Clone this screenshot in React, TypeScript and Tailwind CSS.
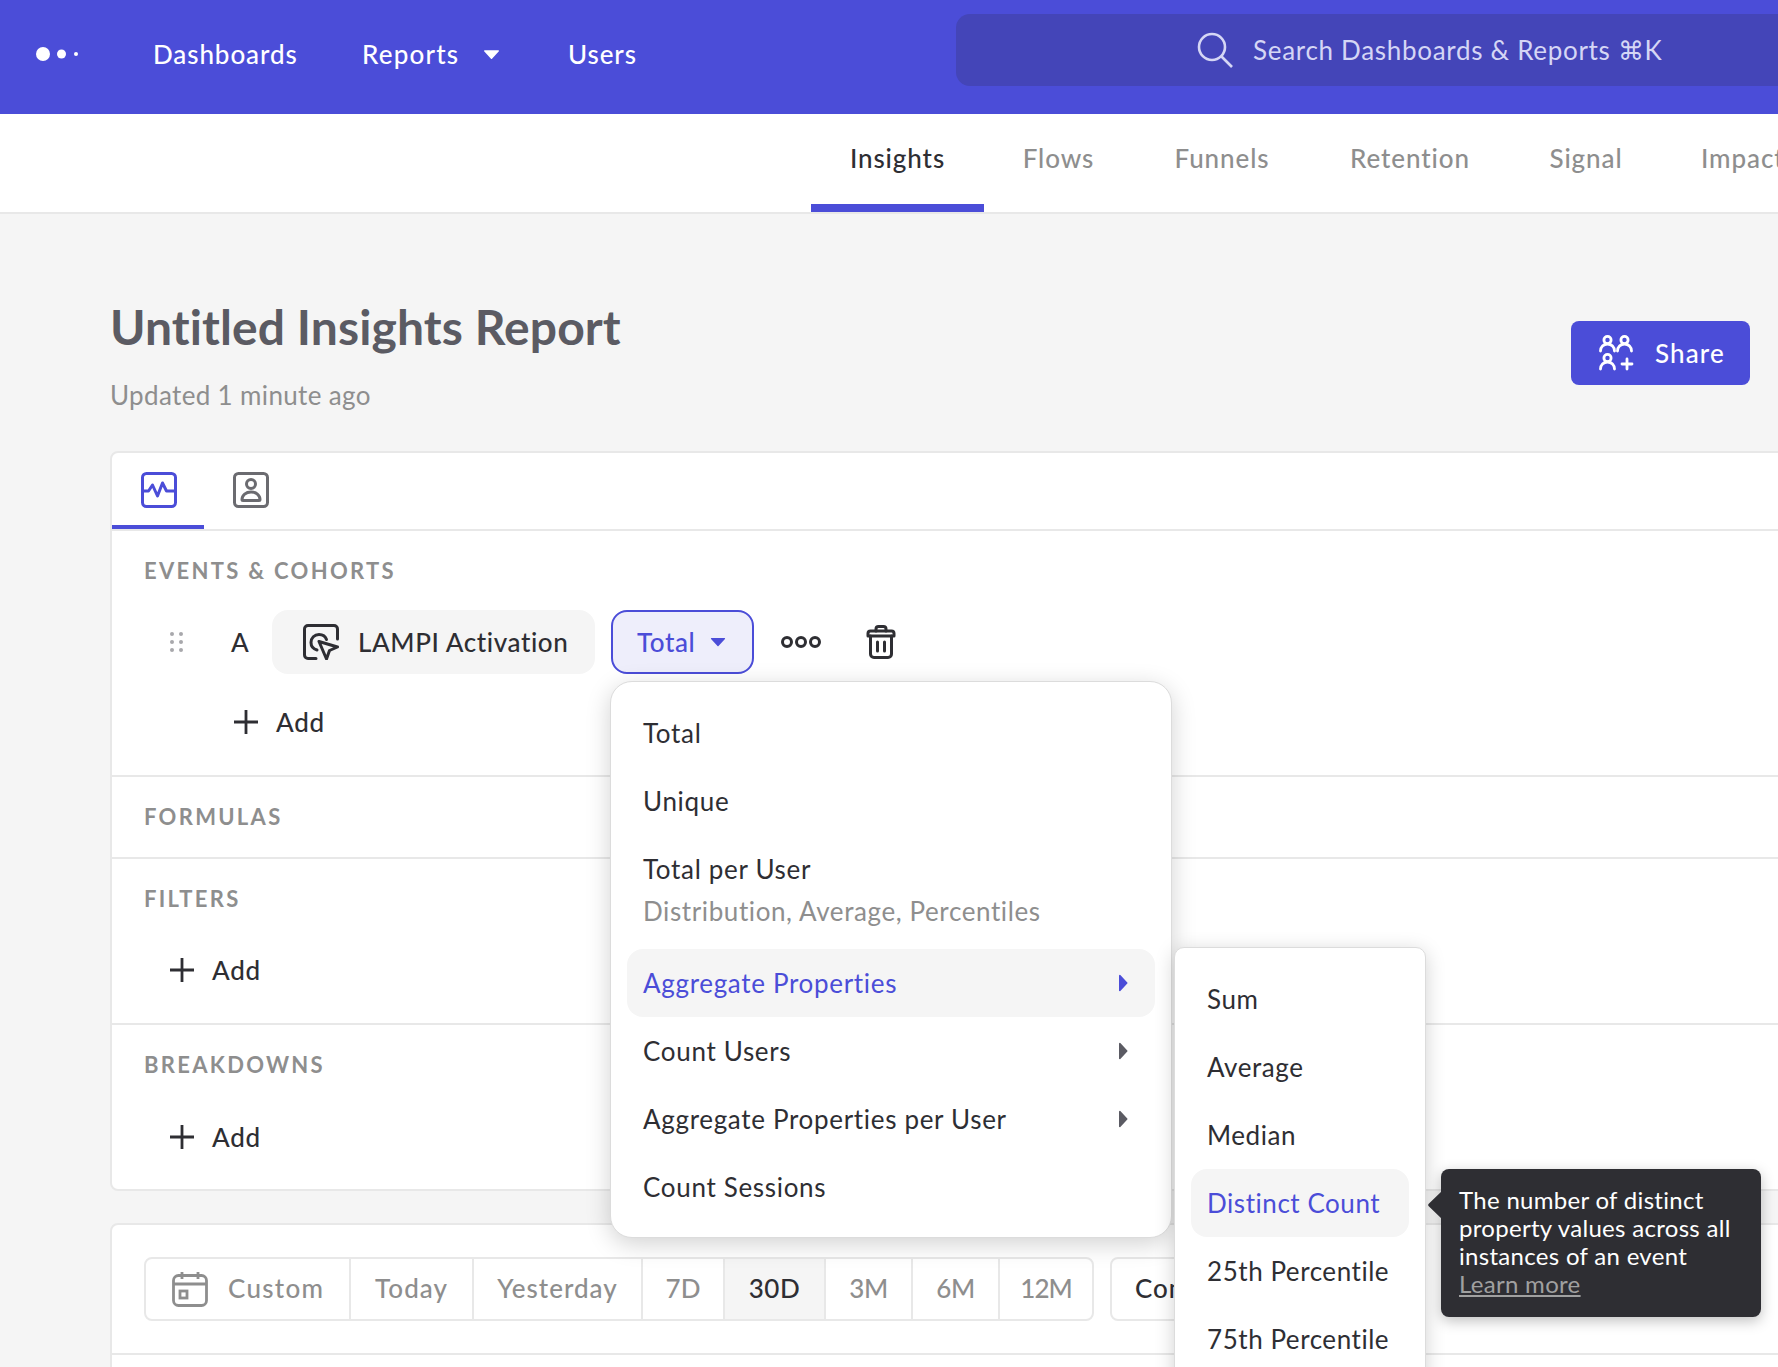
import React from "react";

function Caret({ className }: { className: string }) {
  return (
    <svg viewBox="0 0 16 10" className={className} fill="currentColor">
      <path d="M1.5 1h13a.6.6 0 0 1 .45 1L8.5 9a.7.7 0 0 1-1 0L1.05 2A.6.6 0 0 1 1.5 1z" />
    </svg>
  );
}

function RightCaret({ className }: { className: string }) {
  return (
    <svg viewBox="0 0 10 18" className={className} fill="currentColor">
      <path d="M1 1.6v14.800a.8.8 0 0 0 1.350.55L9.300 9.600a.9.9 0 0 0 0-1.200L2.350 1.050A.8.8 0 0 0 1 1.600z" />
    </svg>
  );
}

function Plus() {
  return (
    <svg viewBox="0 0 24 24" className="w-[24px] h-[24px] text-[#2e2e33]" fill="none" stroke="currentColor" strokeWidth="2.8">
      <path d="M12 0v24M0 12h24" />
    </svg>
  );
}

function SectionTitle({ children }: { children: React.ReactNode }) {
  return <div className="text-[22px] leading-[26px] font-bold tracking-[2.3px] text-[#8e8e8e]">{children}</div>;
}

function AddRow({ className }: { className: string }) {
  return (
    <div className={`flex items-center gap-[18px] text-[26px] leading-[32px] tracking-[0.7px] font-medium text-[#2e2e33] ${className}`}>
      <Plus />
      <span>Add</span>
    </div>
  );
}

function MenuItem({ label, active, arrow }: { label: string; active?: boolean; arrow?: boolean }) {
  return (
    <div
      className={`h-[68px] flex items-center justify-between pl-[16px] pr-[27px] rounded-[16px] ${
        active ? "bg-[#f5f5f5] text-[#4b4dd8]" : "text-[#2e2e33]"
      }`}
    >
      <span>{label}</span>
      {arrow && <RightCaret className={`w-[10px] h-[18px] ${active ? "text-[#4b4dd8]" : "text-[#5b5b63]"}`} />}
    </div>
  );
}

const ranges = [
  { label: "Today", w: "w-[123px]", t: "tracking-[1px]" },
  { label: "Yesterday", w: "w-[169px]", t: "tracking-[1px]" },
  { label: "7D", w: "w-[82px]", t: "tracking-[0px]" },
  { label: "30D", w: "w-[101px]", t: "tracking-[0.5px]", active: true },
  { label: "3M", w: "w-[87px]", t: "tracking-[-0.3px]" },
  { label: "6M", w: "w-[87px]", t: "tracking-[-0.3px]" },
  { label: "12M", w: "w-[92px]", t: "tracking-[-1px]" },
];

export default function App() {
  return (
    <div
      className="relative w-[1778px] h-[1367px] overflow-hidden bg-[#f5f5f5] text-[#2e2e33]"
      style={{ fontFamily: '"Lato", "Noto Sans", sans-serif' }}
    >
      {/* Top bar */}
      <header className="h-[114px] bg-[#4b4dd8] flex items-start">
        <div className="flex items-center h-[108px] pl-[36px] w-[153px] shrink-0">
          <svg viewBox="0 0 42 14" className="w-[42px] h-[14px]" fill="#fff">
            <circle cx="7" cy="7" r="7" />
            <circle cx="25.5" cy="7" r="4.5" />
            <circle cx="40" cy="7" r="2" />
          </svg>
        </div>
        <nav className="flex items-center h-[108px] text-[26px] font-medium text-white tracking-[0.9px]">
          <span className="w-[209px]">Dashboards</span>
          <span className="w-[206px] flex items-center tracking-[1.2px]">
            Reports
            <Caret className="ml-[24px] w-[17px] h-[11px] text-white" />
          </span>
          <span>Users</span>
        </nav>
        <div className="mt-[14px] ml-auto w-[822px] h-[72px] bg-[#4445b8] rounded-l-[14px] flex items-center pl-[241px] text-[26px] text-[#d5d6f5] tracking-[0.7px]">
          <svg viewBox="0 0 36 36" className="w-[36px] h-[36px] mr-[20px]" fill="none" stroke="currentColor" strokeWidth="2.6">
            <circle cx="15" cy="15" r="13" />
            <path d="M24.5 24.5 35 35" />
          </svg>
          <span>Search Dashboards &amp; Reports ⌘K</span>
        </div>
      </header>

      {/* Report tabs */}
      <div className="h-[100px] bg-white border-b-2 border-[#e8e8e8] flex pl-[811px] text-[26px] font-medium text-[#8e8e8e] tracking-[0.9px] whitespace-nowrap">
        <div className="h-[98px] w-[173px] shrink-0 border-b-[8px] border-[#4b4dd8] flex items-center justify-center text-[#2e2e33] pb-[2px]">
          Insights
        </div>
        <div className="h-[98px] w-[149px] shrink-0 flex items-center justify-center pb-[10px]">Flows</div>
        <div className="h-[98px] w-[178px] shrink-0 flex items-center justify-center pb-[10px]">Funnels</div>
        <div className="h-[98px] w-[198px] shrink-0 flex items-center justify-center pb-[10px]">Retention</div>
        <div className="h-[98px] w-[154px] shrink-0 flex items-center justify-center pb-[10px]">Signal</div>
        <div className="h-[98px] shrink-0 pl-[38px] flex items-center pb-[10px]">Impact</div>
      </div>

      {/* Title */}
      <div className="h-[237px] pl-[110px] pr-[28px] flex justify-between">
        <div>
          <h1 className="mt-[83px] text-[48px] leading-[60px] font-bold tracking-[0.1px] text-[#5b5b63]">Untitled Insights Report</h1>
          <p className="mt-[22px] text-[26px] leading-[32px] tracking-[0.35px] text-[#8e8e8e]">Updated 1 minute ago</p>
        </div>
        <button className="mt-[107px] w-[179px] h-[64px] bg-[#4b4dd8] rounded-[8px] flex items-center pl-[28px] text-white text-[26px] font-medium tracking-[1.1px]">
          <svg viewBox="0 0 36 36" className="w-[36px] h-[36px] mr-[20px]" fill="none" stroke="#fff" strokeWidth="2.8" strokeLinecap="round">
            <circle cx="8.5" cy="5" r="3.6" />
            <path d="M1.5 16c0-4 3-7 7-7s7 3 7 7" />
            <circle cx="25.5" cy="5" r="3.6" />
            <path d="M18.5 16c0-4 3-7 7-7s7 3 7 7" />
            <circle cx="8.5" cy="23" r="3.6" />
            <path d="M1.5 34c0-4 3-7 7-7s7 3 7 7" />
            <path d="M23 29h10M28 24v10" />
          </svg>
          Share
        </button>
      </div>

      {/* Query panel */}
      <section className="ml-[110px] w-[1800px] h-[740px] bg-white border-2 border-[#e8e8e8] rounded-[8px]">
        <div className="h-[78px] border-b-2 border-[#e8e8e8] flex">
          <div className="w-[92px] h-[76px] border-b-[4px] border-[#4b4dd8] pl-[29px] pt-[19px]">
            <svg viewBox="0 0 36 36" className="w-[36px] h-[36px]" fill="none" stroke="#4b4dd8" strokeWidth="3" strokeLinejoin="round">
              <rect x="1.5" y="1.5" width="33" height="33" rx="4" />
              <path d="M1.5 19h6l4-6 5 11 5-13 4 8h8.5" />
            </svg>
          </div>
          <div className="pl-[29px] pt-[19px]">
            <svg viewBox="0 0 36 36" className="w-[36px] h-[36px]" fill="none" stroke="#6b6b70" strokeWidth="3">
              <rect x="1.5" y="1.5" width="33" height="33" rx="4" />
              <circle cx="18" cy="12" r="4.5" />
              <path d="M9 27.500c0-4.500 4-7.500 9-7.500s9 3 9 7.500c0 .5-.5 1-1 1H10c-.5 0-1-.5-1-1z" strokeLinejoin="round" />
            </svg>
          </div>
        </div>

        <div className="h-[246px] border-b-2 border-[#e8e8e8] relative">
          <div className="pl-[32px] pt-[27px]">
            <SectionTitle>EVENTS &amp; COHORTS</SectionTitle>
          </div>
          <div className="mt-[26px] flex items-center h-[64px] pl-[58px] text-[26px] font-medium tracking-[0.6px]">
            <svg viewBox="0 0 13 20" className="w-[13px] h-[20px]" fill="#a8a8ac">
              <circle cx="2" cy="2" r="2" />
              <circle cx="11" cy="2" r="2" />
              <circle cx="2" cy="10" r="2" />
              <circle cx="11" cy="10" r="2" />
              <circle cx="2" cy="18" r="2" />
              <circle cx="11" cy="18" r="2" />
            </svg>
            <span className="ml-[48px] w-[41px]">A</span>
            <div className="w-[323px] h-[64px] rounded-[16px] bg-[#f5f5f5] flex items-center pl-[31px]">
              <svg viewBox="0 0 36 36" className="w-[36px] h-[36px] mr-[19px]" fill="none" stroke="#2e2e33" strokeWidth="3" strokeLinejoin="round" strokeLinecap="round">
                <path d="M13 34.500H5a3.500 3.500 0 0 1-3.500-3.500V5A3.500 3.500 0 0 1 5 1.500h26A3.500 3.500 0 0 1 34.500 5v10" />
                <path d="M14 26c-3.500-1-6-4-6-7.500C8 14 11.500 10.500 16 10.500c3.500 0 6.500 2 7.500 5" />
                <path d="M16 17.500 34.500 23l-8 3.500-3 8.500z" />
              </svg>
              LAMPI Activation
            </div>
            <div className="ml-[16px] w-[143px] h-[64px] rounded-[16px] bg-[#eeeefb] border-2 border-[#4b4dd8] flex items-center pl-[24px] text-[#4b4dd8]">
              Total
              <Caret className="ml-[15px] w-[16px] h-[10px] text-[#4b4dd8]" />
            </div>
            <svg viewBox="0 0 40 12" className="ml-[27px] w-[40px] h-[12px]" fill="none" stroke="#2e2e33" strokeWidth="3">
              <circle cx="6" cy="6" r="4.500" />
              <circle cx="20" cy="6" r="4.500" />
              <circle cx="34" cy="6" r="4.500" />
            </svg>
            <svg viewBox="0 0 32 34" className="ml-[44px] w-[32px] h-[34px]" fill="none" stroke="#2e2e33" strokeWidth="3" strokeLinejoin="round" strokeLinecap="round">
              <path d="M3 8.500c0-1.500 1-2.500 2.500-2.500h21c1.500 0 2.500 1 2.500 2.500V11H3z" />
              <path d="M11 6V4c0-1.500 1-2.500 2.500-2.500h5C20 1.500 21 2.500 21 4v2" />
              <path d="M5.500 11v18c0 2 1.500 3.500 3.500 3.500h14c2 0 3.500-1.500 3.500-3.500V11" />
              <path d="M12.500 17v9M19.500 17v9" />
            </svg>
          </div>
          <AddRow className="absolute left-[122px] top-[175px]" />
        </div>

        <div className="h-[82px] border-b-2 border-[#e8e8e8] pl-[32px] pt-[27px]">
          <SectionTitle>FORMULAS</SectionTitle>
        </div>

        <div className="h-[166px] border-b-2 border-[#e8e8e8] pl-[32px] pt-[27px]">
          <SectionTitle>FILTERS</SectionTitle>
          <AddRow className="mt-[42px] ml-[26px]" />
        </div>

        <div className="pl-[32px] pt-[27px]">
          <SectionTitle>BREAKDOWNS</SectionTitle>
          <AddRow className="mt-[43px] ml-[26px]" />
        </div>
      </section>

      {/* Date panel */}
      <section className="mt-[32px] ml-[110px] w-[1800px] h-[200px] bg-white border-2 border-[#e8e8e8] rounded-[8px]">
        <div className="h-[130px] border-b-2 border-[#e8e8e8] pl-[32px] pt-[32px] flex items-start">
          <div className="h-[64px] border-2 border-[#e8e8e8] rounded-[8px] flex text-[26px] font-medium text-[#8e8e8e]">
            <div className="w-[205px] flex items-center pl-[26px] gap-[20px] border-r-2 border-[#e8e8e8] tracking-[1.3px] pb-[1px]">
              <svg viewBox="0 0 36 36" className="w-[36px] h-[36px]" fill="none" stroke="#8e8e8e" strokeWidth="2.8">
                <rect x="1.500" y="4.500" width="33" height="30" rx="5" />
                <path d="M1.500 13h33M10 1v7M26 1v7" />
                <rect x="8" y="20" width="7" height="7" />
              </svg>
              Custom
            </div>
            {ranges.map((r) => (
              <div
                key={r.label}
                className={`${r.w} ${r.t} flex items-center justify-center border-r-2 border-[#e8e8e8] last:border-r-0 pb-[2px] ${
                  r.active ? "bg-[#f5f5f5] text-[#2e2e33]" : ""
                }`}
              >
                {r.label}
              </div>
            ))}
          </div>
          <div className="ml-[16px] w-[200px] h-[64px] border-2 border-[#e8e8e8] rounded-[8px] flex items-center pl-[23px] pb-[2px] text-[26px] font-medium tracking-[1px]">
            Compare
          </div>
        </div>
      </section>

      {/* Aggregation menu */}
      <div className="absolute left-[610px] top-[681px] w-[562px] h-[557px] bg-white border border-[#dcdcdc] rounded-[22px] shadow-[0_6px_24px_rgba(0,0,0,0.18)] p-[16px] pt-[17px] text-[26px] tracking-[0.68px]">
        <MenuItem label="Total" />
        <MenuItem label="Unique" />
        <div className="h-[114px] pl-[16px] pt-[18px] leading-[32px]">
          <div>Total per User</div>
          <div className="mt-[10px] text-[#8e8e8e] tracking-[0.6px]">Distribution, Average, Percentiles</div>
        </div>
        <MenuItem label="Aggregate Properties" active arrow />
        <MenuItem label="Count Users" arrow />
        <MenuItem label="Aggregate Properties per User" arrow />
        <MenuItem label="Count Sessions" />
      </div>

      {/* Sub menu */}
      <div className="absolute left-[1174px] top-[947px] w-[252px] h-[460px] bg-white border border-[#dcdcdc] rounded-[10px] shadow-[0_4px_20px_rgba(0,0,0,0.18)] px-[16px] pt-[17px] text-[26px] tracking-[0.55px]">
        {["Sum", "Average", "Median", "Distinct Count", "25th Percentile", "75th Percentile"].map((l) => (
          <div
            key={l}
            className={`h-[68px] flex items-center pl-[16px] rounded-[16px] whitespace-nowrap ${
              l === "Distinct Count" ? "bg-[#f5f5f5] text-[#4b4dd8]" : ""
            }`}
          >
            {l}
          </div>
        ))}
      </div>

      {/* Tooltip */}
      <div className="absolute left-[1441px] top-[1169px] w-[320px] h-[148px] bg-[#2e2e33] rounded-[8px] shadow-[0_4px_14px_rgba(0,0,0,0.25)] pl-[18px] pt-[17px] text-[24px] leading-[28px] text-white tracking-[0.3px]">
        <svg viewBox="0 0 14 28" className="absolute left-[-13px] top-[22px] w-[14px] h-[28px]" fill="#2e2e33">
          <path d="M14 0v28L1 15.500a2 2 0 0 1 0-3z" />
        </svg>
        <div>The number of distinct</div>
        <div>property values across all</div>
        <div>instances of an event</div>
        <div className="text-[#a0a0a0] underline">Learn more</div>
      </div>
    </div>
  );
}
